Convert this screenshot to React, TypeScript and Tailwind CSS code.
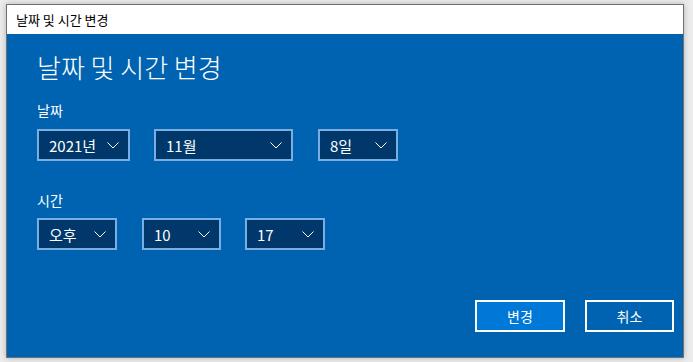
import { useState } from "react";

const font = { fontFamily: '"Noto Sans CJK KR", "Noto Sans", sans-serif' };

const Chevron = () => (
  <svg width="12" height="7" viewBox="0 0 12 7" fill="none" className="shrink-0">
    <path d="M0.5 0.5 L6 6 L11.5 0.5" stroke="#ffffff" strokeWidth="1" />
  </svg>
);

type DropProps = { value: string; width: string };

const Dropdown = ({ value, width }: DropProps) => (
  <div
    className={`${width} h-[32px] flex items-center justify-between pl-[10px] pr-[9px] border-2 border-[#7aaee0] bg-[#00386b] text-white text-[15px]`}
  >
    <span className="leading-none">{value}</span>
    <Chevron />
  </div>
);

export default function App() {
  const [date] = useState({ year: "2021년", month: "11월", day: "8일" });
  const [time] = useState({ ampm: "오후", hour: "10", min: "17" });

  return (
    <div className="w-[693px] h-[362px] bg-[#ececec] pt-[4px] pl-[6px] overflow-hidden" style={font}>
      <div className="w-[678px] h-[354px] border border-[#707070] flex flex-col shadow-[0_0_6px_rgba(0,0,0,0.25)]">
        {/* title bar */}
        <div className="h-[29px] bg-white flex items-center pl-[9px] text-[13px] text-black">
          날짜 및 시간 변경
        </div>

        {/* body */}
        <div className="flex-1 bg-[#0063b1] text-white pl-[30px] pr-[9px] flex flex-col">
          <h1 className="text-[26px] leading-none mt-[20px] font-light">날짜 및 시간 변경</h1>

          <div className="text-[14px] leading-none mt-[23px]">날짜</div>
          <div className="flex mt-[12px]">
            <Dropdown value={date.year} width="w-[93px]" />
            <div className="w-[24px]" />
            <Dropdown value={date.month} width="w-[139px]" />
            <div className="w-[25px]" />
            <Dropdown value={date.day} width="w-[80px]" />
          </div>

          <div className="text-[14px] leading-none mt-[32px]">시간</div>
          <div className="flex mt-[11px]">
            <Dropdown value={time.ampm} width="w-[80px]" />
            <div className="w-[25px]" />
            <Dropdown value={time.hour} width="w-[79px]" />
            <div className="w-[24px]" />
            <Dropdown value={time.min} width="w-[80px]" />
          </div>

          <div className="flex justify-end gap-[20px] mt-auto mb-[25px]">
            <button className="w-[90px] h-[32px] border-2 border-white bg-[#0078d7] text-white text-[14px]">
              변경
            </button>
            <button className="w-[89px] h-[32px] border-2 border-white bg-[#0063b1] text-white text-[14px]">
              취소
            </button>
          </div>
        </div>
      </div>
    </div>
  );
}
